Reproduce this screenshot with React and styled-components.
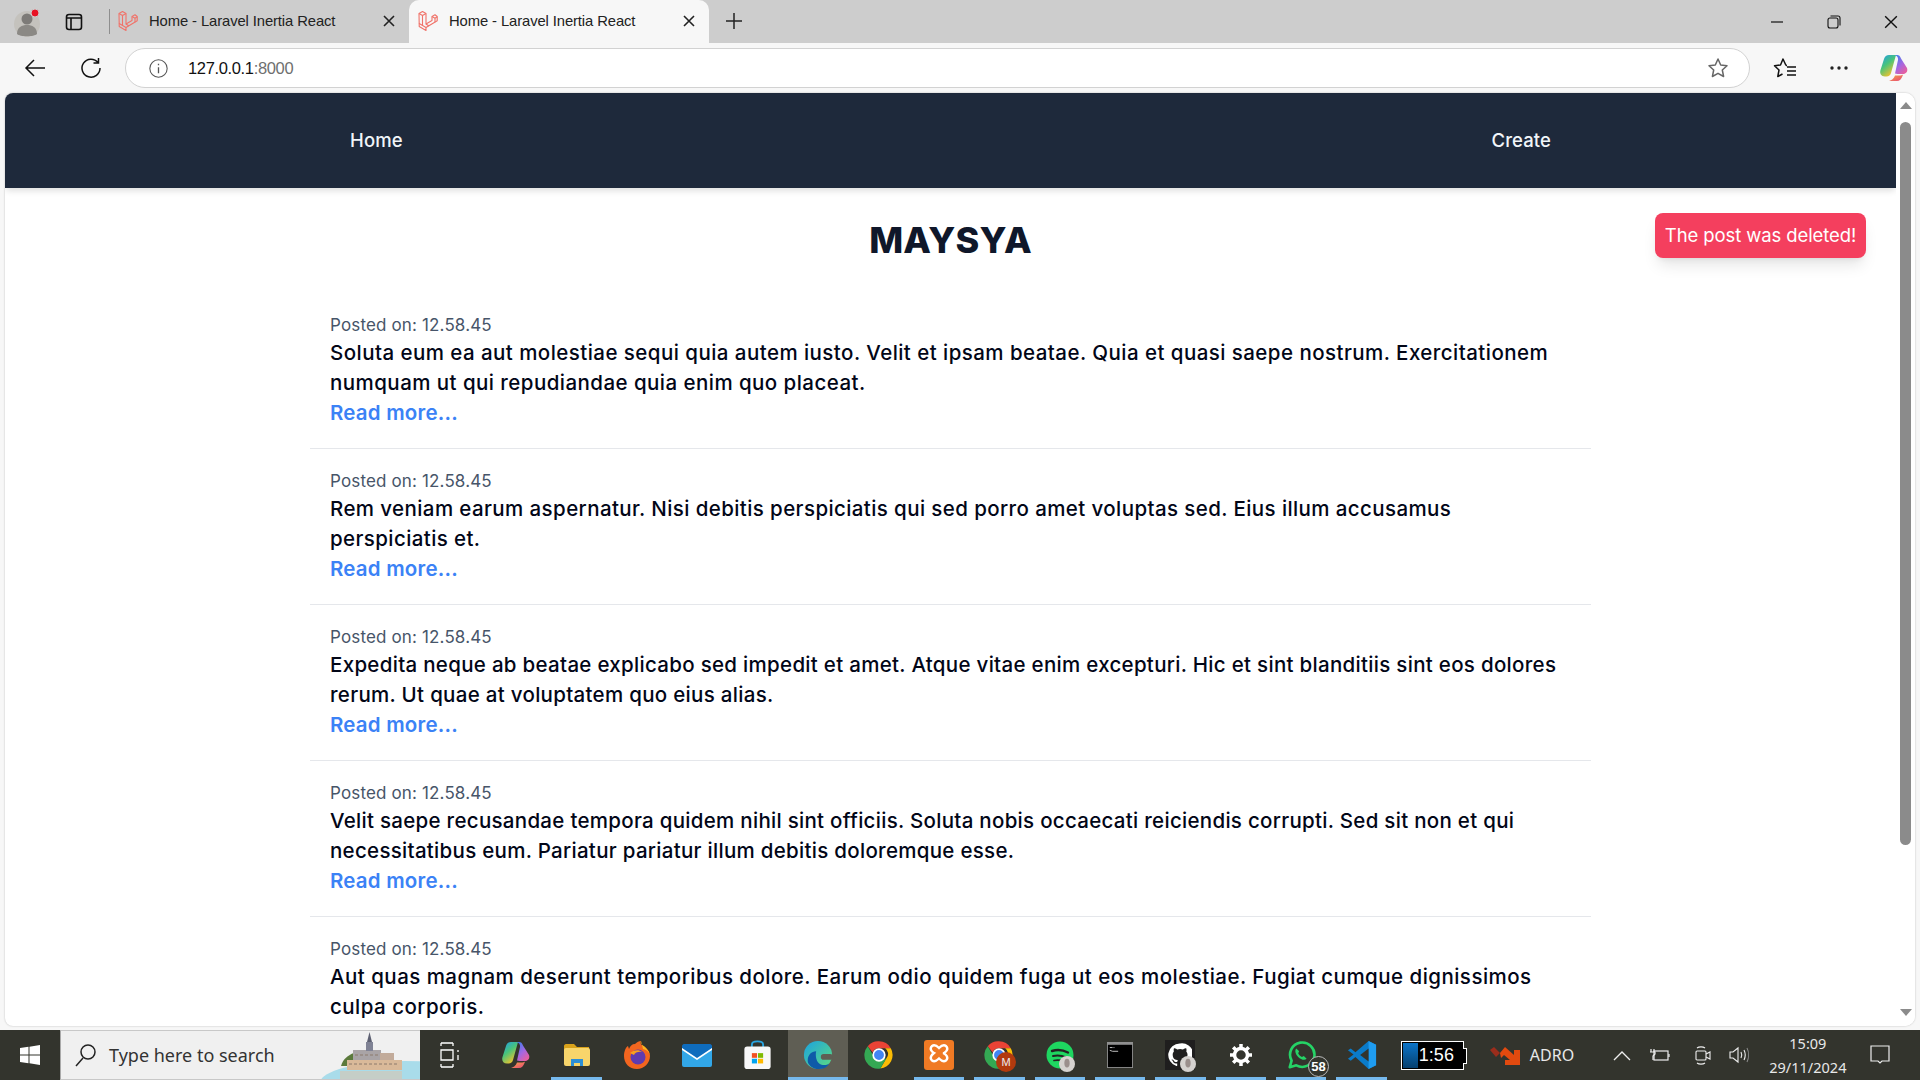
import React from "react";
import styled, { createGlobalStyle } from "styled-components";

const Global = createGlobalStyle`
  html, body { margin: 0; padding: 0; height: 100%; overflow: hidden; background: #fff; }
  #root { width: 1920px; height: 1080px; }
  * { box-sizing: border-box; }
`;
const Desktop = styled.div`
  width: 1920px; height: 1080px; display: flex; flex-direction: column; overflow: hidden;
  font-family: "Open Sans", "Liberation Sans", sans-serif;
`;
const TabStrip = styled.div`
  height: 43px; flex: none; background: #cdcdcd; display: flex; align-items: stretch; position: relative;
`;
const ProfileSlot = styled.div`
  width: 56px; display: flex; align-items: center; justify-content: center;
`;
const SideSlot = styled.div`
  width: 36px; display: flex; align-items: center; justify-content: center; margin-right: 17px;
`;
const Tab = styled.div`
  width: 300px; display: flex; align-items: center; gap: 11px; padding: 0 0 2px 9px; position: relative;
  font-family: "Liberation Sans", sans-serif; font-size: 14.8px; color: #222; letter-spacing: -.1px;
  background: ${p => (p.$active ? "#f7f7f7" : "transparent")};
  border-radius: ${p => (p.$active ? "10px 10px 0 0" : "0")};
  &::before {
    content: ""; display: ${p => (p.$active ? "none" : "block")}; position: absolute; left: 0; top: 9px; bottom: 9px; width: 1px; background: #8e8e8e;
  }
`;
const TabTitle = styled.span` flex: 1; white-space: nowrap; `;
const TabClose = styled.span` width: 40px; display: flex; align-items: center; justify-content: center; `;
const NewTab = styled.div` width: 50px; display: flex; align-items: center; justify-content: center; padding-bottom: 2px; `;
const WinControls = styled.div` margin-left: auto; display: flex; padding-right: 1px; `;
const WinBtn = styled.div` width: 57px; display: flex; align-items: center; justify-content: center; `;

const Toolbar = styled.div`
  height: 50px; flex: none; background: #f7f7f7; display: flex; align-items: center; padding: 0 0 0 12px;
`;
const ToolBtn = styled.div`
  width: ${p => p.$w || 55}px; height: 40px; flex: none; display: flex; align-items: center; justify-content: center;
  padding-left: ${p => p.$pl || 0}px;
`;
const Address = styled.div`
  width: 1625px; height: 40px; margin: 0 0 0 1px; background: #fff; border: 1.5px solid #d2d2d2; border-radius: 20px;
  display: flex; align-items: center; padding: 0 20px 0 23px; flex: none;
`;
const Url = styled.div`
  margin-left: 20px; font-family: "Liberation Sans", sans-serif; font-size: 16.5px; color: #111; letter-spacing: -.35px;
  span { color: #6f6f6f; }
`;
const AddressEnd = styled.div` margin-left: auto; display: flex; `;

const ViewportArea = styled.div`
  flex: 1; min-height: 0; background: #f7f7f7; padding: 0 5px 4px 5px; display: flex;
`;
const PageFrame = styled.div`
  flex: 1; background: #fff; border-radius: 8px 10px 10px 8px; overflow: hidden; display: flex; position: relative;
  box-shadow: 0 0 2px rgba(0,0,0,.25);
`;
const Page = styled.div` flex: 1; min-width: 0; overflow: hidden; font-family: Inter, "Noto Sans", sans-serif; `;
const Nav = styled.nav`
  height: 95px; background: #1e293b; display: flex; align-items: center; justify-content: space-between;
  padding: 0 345px 2px; box-shadow: 0 4px 6px -1px rgba(0,0,0,.12);
`;
const NavLink = styled.a` color: #f1f5f9; font-size: 18.5px; font-weight: 500; letter-spacing: .1px; `;
const Title = styled.h1`
  margin: 0; padding-top: 29px; height: 105px; text-align: center; font-size: 36px; line-height: 46px; font-weight: 800; color: #0f172a;
  letter-spacing: .2px; font-family: Inter, sans-serif;
`;
const Posts = styled.div` width: 1281px; margin-left: 305px; `;
const Post = styled.article` height: 156px; padding: 19px 20px 0 20px; border-bottom: 1px solid #e5e7eb; `;
const Posted = styled.div`
  font-size: 17px; line-height: 26px; color: #475569; font-weight: 400; letter-spacing: .15px;
`;
const Body = styled.p`
  margin: 0; font-size: 20.5px; line-height: 30px; font-weight: 500; color: #020617; letter-spacing: ${p => p.$ls}px;
`;
const More = styled.a` display: block; font-size: 20.5px; line-height: 30px; font-weight: 600; color: #3b82f6; letter-spacing: .2px; `;
const Toast = styled.div`
  position: absolute; top: 120px; left: 1650px; width: 211px; height: 45px; border-radius: 8px; background: #f43f5e; color: #fff; padding-bottom: 2px;
  font-family: Inter, sans-serif; font-size: 18.5px; font-weight: 400; letter-spacing: -.1px;
  display: flex; align-items: center; justify-content: center; white-space: nowrap;
  box-shadow: 0 10px 15px -3px rgba(0,0,0,.1), 0 4px 6px -4px rgba(0,0,0,.1);
`;
const Scrollbar = styled.div` width: 19px; flex: none; background: #fff; display: flex; flex-direction: column; align-items: center; padding: 9px 0 10px; `;
const ArrowUp = styled.div` width: 0; height: 0; border-left: 6.5px solid transparent; border-right: 6.5px solid transparent; border-bottom: 7px solid #8b8b8b; `;
const ArrowDown = styled(ArrowUp)` border-bottom: 0; border-top: 7px solid #8b8b8b; margin-top: auto; `;
const Thumb = styled.div` width: 11px; height: 723px; background: #8b8b8b; border-radius: 6px; margin-top: 13px; `;

const Taskbar = styled.div` height: 50px; flex: none; background: #33342d; display: flex; align-items: stretch; color: #fff; `;
const StartBtn = styled.div` width: 60px; display: flex; align-items: center; justify-content: center; `;
const Search = styled.div`
  width: 360px; background: #f0f0f0; border-top: 1px solid #c8c8c8; border-bottom: 1px solid #c8c8c8; border-left: 1px solid #aaa; display: flex; align-items: center; position: relative;
  padding-left: 14px; gap: 12px; color: #333; font-family: "Noto Sans", sans-serif; font-size: 18px; overflow: hidden;
`;
const SearchArt = styled.div` position: absolute; right: 0; top: 0; bottom: 0; width: 100px; `;
const TaskCell = styled.div`
  width: ${p => p.$w || 60.4}px; flex: none; display: flex; align-items: center; justify-content: center; position: relative;
  background: ${p => (p.$active ? "#5f5e54" : "transparent")};
  &::after {
    content: ""; display: ${p => (p.$on ? "block" : "none")}; position: absolute; bottom: 0; left: ${p => (p.$active ? "0" : "5px")}; right: ${p => (p.$active ? "0" : "5px")}; height: 3px; background: #76b9ed;
  }
`;
const Battery = styled.div`
  position: relative; width: 63px; height: 29px; margin: 0 26px 0 9px; align-self: center; background: #000; border: 1.5px solid #fff; display: flex; align-items: center; flex: none;
  font-family: "Liberation Sans", sans-serif; font-size: 18px;
  &::before { content: ""; width: 15px; align-self: stretch; margin: 1px 0 1px 1px; background: linear-gradient(#0b74c8, #06406f); }
  &::after { content: ""; position: absolute; right: -4px; top: 6px; width: 3px; height: 14px; background: #000; border: 1.5px solid #fff; border-left: 0; }
`;
const BatteryText = styled.span` margin-left: 1px; `;
const Ticker = styled.div` display: flex; align-items: center; gap: 10px; font-family: "Noto Sans", sans-serif; font-size: 16px; color: #e8e8e8; width: 113px; flex: none; `;
const Tray = styled.div` display: flex; align-items: center; `;
const TrayIcon = styled.div` width: ${p => p.$w || 38}px; flex: none; display: flex; align-items: center; justify-content: center; `;
const Clock = styled.div`
  width: 110px; flex: none; text-align: center; font-family: "Noto Sans", sans-serif; font-size: 14.5px; line-height: 24px; color: #e8e8e8;
`;
const Badge = styled.span`
  position: absolute; left: 37px; top: 26px; width: 21px; height: 21px; border-radius: 50%; background: #33342d; border: 1px solid #bbb;
  font-family: "Liberation Sans", sans-serif; font-size: 13px; font-weight: 700; display: flex; align-items: center; justify-content: center; color: #fff;
`;
const IconStack = styled.span` position: relative; display: flex; `;
const AvatarSpot = styled.span` position: absolute; left: ${p => p.$l}px; top: ${p => p.$t}px; display: flex; `;
const GitTile = styled(IconStack)` width: 30px; height: 30px; background: #1f1e1e; align-items: center; justify-content: center; `;

const Laravel = () => (
  <svg width="20" height="22" viewBox="0 0 20 22" fill="none" stroke="#f0736a" strokeWidth="1.1" strokeLinejoin="round">
    <path d="M1 3.5 4.5 1.5 8 3.5V14l6-3.4V6.5l3-1.8 2.2 1.8v4.2L8 17.5 1.2 13.6Z" />
    <path d="M1 3.5 4.5 5.5 8 3.5M4.5 5.5v10M8 14l3 2M14 6.5l3 1.8 2.2-1.6M17 8.3v4M8 17.5v3l-6.8-3.9v-3" />
  </svg>
);
const XIcon = ({ s = 12, c = "#222", w = 1.6 }) => (
  <svg width={s} height={s} viewBox="0 0 12 12" stroke={c} strokeWidth={w}><path d="M1 1l10 10M11 1 1 11" /></svg>
);
const Profile = () => (
  <svg width="36" height="36" viewBox="0 0 36 36">
    <circle cx="17" cy="20" r="13" fill="#c4c2bd" />
    <circle cx="17" cy="15" r="5.5" fill="#7d7b78" />
    <path d="M7 30c0-7 5-9 10-9s10 2 10 9c-3 3-17 3-20 0Z" fill="#8b8985" />
    <circle cx="25" cy="9" r="4" fill="#e81123" stroke="#cdcdcd" />
  </svg>
);
const Colorful = ({ id = "a" }) => (
  <svg width="30" height="28" viewBox="0 0 30 28">
    <defs>
      <linearGradient id={`cpA${id}`} x1="0" y1="0" x2=".6" y2="1"><stop offset="0" stopColor="#1d9bf0" /><stop offset=".5" stopColor="#49c47a" /><stop offset="1" stopColor="#f5c22a" /></linearGradient>
      <linearGradient id={`cpB${id}`} x1="0" y1="0" x2=".7" y2="1"><stop offset="0" stopColor="#2d7ff0" /><stop offset=".6" stopColor="#a667e0" /><stop offset="1" stopColor="#e65fa0" /></linearGradient>
      <linearGradient id={`cpC${id}`} x1="0" y1="0" x2="1" y2="1"><stop offset="0" stopColor="#f7b23b" /><stop offset="1" stopColor="#e8447a" /></linearGradient>
    </defs>
    <path d="M10 1h7l-5 18c-.6 2-2 3.500-4.500 3.500H6C2 22.500.5 19.500 1.500 16L5 5c.8-2.600 2.600-4 5-4Z" fill={`url(#cpA${id})`} />
    <path d="M15 1h3c2 0 3.200 1.200 4 3.400L28 14c1.200 3.400-1 6-4 6h-5.500l-2.500-.5L19 6c.5-2.500-1.500-5-4-5Z" fill={`url(#cpB${id})`} />
    <path d="M9 27h9c2.500 0 4.500-2 5.500-5l.5-1.500c-1 .7-2 1-4 1h-4C15 24.500 12 27 9 27Z" fill={`url(#cpC${id})`} />
  </svg>
);
const Star = ({ c = "#666", size = 22 }) => (
  <svg width={size} height={size} viewBox="0 0 22 22" fill="none" stroke={c} strokeWidth="1.500" strokeLinejoin="round">
    <path d="M11 2l2.700 6 6.300.7-4.700 4.300 1.300 6.500L11 16.300 5.400 19.500l1.300-6.500L2 8.700 8.300 8Z" />
  </svg>
);
const Favs = () => (
  <svg width="24" height="22" viewBox="0 0 24 22" fill="none" stroke="#111" strokeWidth="1.500" strokeLinejoin="round">
    <path d="M13 8.500 10 2 7.500 8 1.500 8.700 6 13 4.800 19.500 9.500 17" />
    <path d="M13 8.500h1M14 10h9M14 14h9M14 18h9" />
  </svg>
);
const Win = () => (
  <svg width="20" height="20" viewBox="0 0 20 20" fill="#fff"><path d="M0 3l8.500-1.200V9.500H0ZM9.500 1.700 20 0v9.500H9.500ZM0 10.500h8.500v7.700L0 17ZM9.500 10.500H20V20L9.500 18.300Z" /></svg>
);
const Island = () => (
  <svg width="100" height="48" viewBox="0 0 100 48">
    <ellipse cx="85" cy="52" rx="85" ry="22" fill="#a9dcea" />
    <path d="M20 40h62v8H20Z" fill="#cfc9bb" opacity=".75" />
    <path d="M21 35c2-7 7-11 13-13l4 13Z" fill="#5b7a3c" />
    <rect x="27" y="29" width="55" height="10" fill="#d9b999" />
    <rect x="33" y="19" width="28" height="10" fill="#a9a4a6" />
    <rect x="60" y="22" width="14" height="7" fill="#c2ab9a" />
    <rect x="46" y="11" width="7" height="9" fill="#7f8294" />
    <path d="M47 11 49.500 1 52 11Z" fill="#5d6072" />
    <path d="M29 33h50M35 24h24" stroke="#8c7a6c" strokeWidth="1" strokeDasharray="3 2" />
  </svg>
);
const Folder = () => (
  <svg width="28" height="26" viewBox="0 0 28 24"><path d="M1 3c0-1 .8-2 2-2h8l3 3h12v3H1Z" fill="#d9a21b" /><rect x="1" y="5" width="26" height="18" rx="2" fill="#f8d56b" /><path d="M8 23v-7h12v7h-3v-3h-6v3Z" fill="#2d8fd6" /></svg>
);
const Firefox = () => (
  <svg width="28" height="30" viewBox="0 0 28 30">
    <path d="M14 29C6 29 1 23 1 16 1 11 3 7 5 6l1 3c1-3 3-5 6-5 2-2 4-3 6-3-1 2 0 4 2 5 4 2 7 6 7 10 0 7-6 13-13 13Z" fill="#f2651f" />
    <path d="M18 1c-1 3 2 4 4 6 3 3 5 6 5 9 0-3-3-6-7-7Z" fill="#fbb51c" />
    <circle cx="15" cy="17" r="7.500" fill="#5f3bb0" /><path d="M7 13c3-3 9-4 12-1-3-.5-7 0-8 3Z" fill="#f8a01e" />
  </svg>
);
const Mail = () => (
  <svg width="30" height="26" viewBox="0 0 30 24"><rect y="3" width="30" height="21" rx="2" fill="#32a7e8" /><path d="M0 5l15 11L30 5V3c0-1-1-2-2-2H2C1 1 0 2 0 3Z" fill="#0f6cbd" /><path d="M0 5l15 10L30 5v2L15 17 0 7Z" fill="#fff" /></svg>
);
const Store = () => (
  <svg width="29" height="30" viewBox="0 0 30 32">
    <path d="M9 8V5c0-2 2-3.500 6-3.500S21 3 21 5v3" fill="none" stroke="#29a6e2" strokeWidth="2" />
    <rect x="1" y="7" width="28" height="24" rx="3" fill="#f8f8f8" />
    <rect x="9" y="14" width="5.500" height="5" fill="#f25022" /><rect x="15.500" y="14" width="5.500" height="5" fill="#7fba00" />
    <rect x="9" y="20" width="5.500" height="5" fill="#00a4ef" /><rect x="15.500" y="20" width="5.500" height="5" fill="#ffb900" />
  </svg>
);
const Edge = () => (
  <svg width="30" height="30" viewBox="0 0 32 32">
    <defs>
      <linearGradient id="edA" x1="0" y1="0" x2="1" y2="1"><stop offset="0" stopColor="#1aa2e0" /><stop offset="1" stopColor="#5fdc7e" /></linearGradient>
    </defs>
    <circle cx="16" cy="16" r="15" fill="url(#edA)" />
    <path d="M14 12c-5 0-9 4-9 10 0 4 5 9 12 9 5 0 9-2 11-6-3 2-6 2-9 1-5-2-6-9-5-14Z" fill="#0f5aa8" />
    <rect x="19" y="15" width="13" height="6" fill="#5f5e54" rx="3" />
  </svg>
);
const Chrome = ({ size = 30 }) => (
  <svg width={size} height={size} viewBox="2 2 44 44">
    <path d="M24 4a20 20 0 0 1 17.300 10H24a10 10 0 0 0-9.300 6.500L7.500 11A20 20 0 0 1 24 4Z" fill="#ea4335" />
    <path d="M41.300 14A20 20 0 0 1 26 43.900L34.700 29A10 10 0 0 0 33 14Z" fill="#fbbc04" />
    <path d="M26 43.900A20 20 0 0 1 7.500 11l8.700 15a10 10 0 0 0 10 4.800L34.700 29Z" fill="#34a853" />
    <circle cx="24" cy="24" r="8.500" fill="#4285f4" stroke="#fff" strokeWidth="2.500" />
  </svg>
);
const Xampp = () => (
  <svg width="30" height="30" viewBox="0 0 30 30">
    <rect width="30" height="30" rx="3" fill="#f07a24" />
    <path d="M8 6c3-2 5 0 7 2 2-2 4-4 7-2 3 3 0 6-2 7l0 .5c2 1 5 4 2 7-3 2-5 0-7-2-2 2-4 4-7 2-3-3 0-6 2-7.500-2-1-5-4-2-7Z" fill="none" stroke="#fff" strokeWidth="2.400" />
  </svg>
);
const Avatar = () => (
  <svg width="16" height="18" viewBox="0 0 18 18"><circle cx="9" cy="9" r="9" fill="#d5d2cf" /><ellipse cx="9" cy="8" rx="3" ry="5" fill="#9a8f8c" /></svg>
);
const Spotify = () => (
  <IconStack>
    <svg width="28" height="28" viewBox="0 0 28 28" fill="none"><circle cx="14" cy="14" r="13.500" fill="#1ed760" /><g stroke="#222" strokeLinecap="round"><path d="M6 10c5-1.500 11-1 16 1.500" strokeWidth="2.400" /><path d="M7 15c5-1 9-.5 13 1.500" strokeWidth="2" /><path d="M8 19.500c4-.8 7-.4 10.500 1" strokeWidth="1.700" /></g></svg>
    <AvatarSpot $l={13} $t={14}><Avatar /></AvatarSpot>
  </IconStack>
);
const Cmd = () => (
  <svg width="28" height="26" viewBox="0 0 28 28"><rect width="28" height="28" fill="#8f8f8f" /><rect x="1" y="3" width="26" height="24" fill="#000" /><path d="M3 6h3M7 6h1M3 9l3 1h6" stroke="#ccc" fill="none" /></svg>
);
const GitHub = () => (
  <GitTile>
    <svg width="24" height="24" viewBox="0 0 24 24" fill="#fff"><path d="M12 .5A11.500 11.500 0 0 0 8.400 23c.6.100.8-.3.800-.6v-2c-3.200.7-3.900-1.400-3.900-1.400-.5-1.300-1.300-1.700-1.300-1.700-1-.7.100-.7.100-.7 1.200.1 1.800 1.200 1.800 1.200 1 1.800 2.700 1.300 3.400 1 .1-.8.400-1.300.7-1.600-2.600-.3-5.300-1.300-5.300-5.700 0-1.300.5-2.300 1.200-3.100-.1-.3-.5-1.500.1-3.100 0 0 1-.3 3.200 1.200a11 11 0 0 1 5.800 0c2.200-1.500 3.200-1.200 3.200-1.200.6 1.600.2 2.800.1 3.100.8.800 1.200 1.900 1.200 3.100 0 4.400-2.700 5.400-5.300 5.700.4.400.8 1.100.8 2.200v3.200c0 .3.200.7.800.6A11.500 11.500 0 0 0 12 .5Z" /></svg>
    <AvatarSpot $l={15} $t={15}><Avatar /></AvatarSpot>
  </GitTile>
);
const Gear = () => (
  <svg width="24" height="24" viewBox="0 0 24 24" fill="none" stroke="#fff"><circle cx="12" cy="12" r="6.500" strokeWidth="3.500" /><path d="M12 1v4M12 19v4M1 12h4M19 12h4M4.200 4.200l2.800 2.800M17 17l2.800 2.800M19.800 4.200 17 7M7 17l-2.800 2.800" strokeWidth="3.500" /></svg>
);
const Whatsapp = () => (
  <svg width="30" height="30" viewBox="0 0 30 32" fill="none"><path d="M3 29l2-7A13 13 0 1 1 10 27Z" stroke="#25d366" strokeWidth="2.800" strokeLinejoin="round" /><path d="M10 9c-2 2-1 6 2 9s7 4 9 2l-3-3-2 1c-2-1-3-2-4-4l1-2Z" fill="#25d366" /></svg>
);
const VSCode = () => (
  <svg width="30" height="30" viewBox="0 0 30 32">
    <path d="M22 1 30 5v22l-8 4L8 18l-5 4-3-2 6-4.500L0 11l3-2 5 4Z" fill="#0a7bca" />
    <path d="M22 1v30l8-4V5Z" fill="#1f9cf0" /><path d="M22 9 13 16l9 7Z" fill="#33342d" />
  </svg>
);
const Adro = () => (
  <svg width="30" height="20" viewBox="0 0 30 20"><path d="M0 5l4-3 6 6-4 4Z" fill="#9b2d1c" /><path d="M10 8l5-6 9 8V5h6v15H15v-5h5l-6-5-3 3Z" fill="#e24a0f" /></svg>
);
const Mbadge = () => (
  <IconStack>
    <Chrome />
    <AvatarSpot $l={12} $t={12}>
      <svg width="20" height="20" viewBox="0 0 20 20"><circle cx="10" cy="10" r="10" fill="#b23a0e" /><text x="10" y="14" textAnchor="middle" fontSize="11" fill="#eee" fontFamily="Liberation Sans">M</text></svg>
    </AvatarSpot>
  </IconStack>
);

const posts = [
  { ls: 0.45, t: "Soluta eum ea aut molestiae sequi quia autem iusto. Velit et ipsam beatae. Quia et quasi saepe nostrum. Exercitationem numquam ut qui repudiandae quia enim quo placeat.", more: true },
  { ls: 0.4, t: "Rem veniam earum aspernatur. Nisi debitis perspiciatis qui sed porro amet voluptas sed. Eius illum accusamus perspiciatis et.", more: true },
  { ls: 0.3, t: "Expedita neque ab beatae explicabo sed impedit et amet. Atque vitae enim excepturi. Hic et sint blanditiis sint eos dolores rerum. Ut quae at voluptatem quo eius alias.", more: true },
  { ls: 0.29, t: "Velit saepe recusandae tempora quidem nihil sint officiis. Soluta nobis occaecati reiciendis corrupti. Sed sit non et qui necessitatibus eum. Pariatur pariatur illum debitis doloremque esse.", more: true },
  { ls: 0.47, t: "Aut quas magnam deserunt temporibus dolore. Earum odio quidem fuga ut eos molestiae. Fugiat cumque dignissimos culpa corporis.", more: false },
];

export default function App() {
  return (
    <Desktop>
      <Global />
      <TabStrip>
        <ProfileSlot><Profile /></ProfileSlot>
        <SideSlot>
          <svg width="18" height="18" viewBox="0 0 18 18" fill="none" stroke="#111" strokeWidth="1.600"><rect x="1.500" y="1.500" width="15" height="15" rx="2.500" /><path d="M1.500 5h15M6 5v11.500" /></svg>
        </SideSlot>
        <Tab><Laravel /><TabTitle>Home - Laravel Inertia React</TabTitle><TabClose><XIcon /></TabClose></Tab>
        <Tab $active><Laravel /><TabTitle>Home - Laravel Inertia React</TabTitle><TabClose><XIcon /></TabClose></Tab>
        <NewTab><svg width="18" height="18" viewBox="0 0 18 18" stroke="#222" strokeWidth="1.500"><path d="M9 1v16M1 9h16" /></svg></NewTab>
        <WinControls>
          <WinBtn><svg width="14" height="14" viewBox="0 0 14 14" stroke="#111" strokeWidth="1.200"><path d="M1 7h12" /></svg></WinBtn>
          <WinBtn><svg width="14" height="14" viewBox="0 0 14 14" fill="none" stroke="#111" strokeWidth="1.100"><rect x="1" y="3" width="10" height="10" rx="2" /><path d="M3.500 1H11a2 2 0 0 1 2 2v7.500" /></svg></WinBtn>
          <WinBtn><XIcon s={14} c="#111" w={1.200} /></WinBtn>
        </WinControls>
      </TabStrip>
      <Toolbar>
        <ToolBtn $w={46}><svg width="22" height="20" viewBox="0 0 22 20" fill="none" stroke="#111" strokeWidth="1.500"><path d="M21 10H2M10 2l-8 8 8 8" /></svg></ToolBtn>
        <ToolBtn $w={66}><svg width="22" height="22" viewBox="0 0 22 22" fill="none" stroke="#111" strokeWidth="1.500"><path d="M18 5.500A9 9 0 1 0 20 11M18.500 1v5h-5" /></svg></ToolBtn>
        <Address>
          <svg width="19" height="19" viewBox="0 0 16 16" fill="none" stroke="#555" strokeWidth=".9"><circle cx="8" cy="8" r="7.300" /><path d="M8 7v5M8 4v1.300" strokeWidth="1.100" /></svg>
          <Url>127.0.0.1<span>:8000</span></Url>
          <AddressEnd><Star /></AddressEnd>
        </Address>
        <ToolBtn $w={69}><Favs /></ToolBtn>
        <ToolBtn $w={40}><svg width="20" height="6" viewBox="0 0 20 6" fill="#222"><circle cx="3" cy="3" r="1.700" /><circle cx="10" cy="3" r="1.700" /><circle cx="17" cy="3" r="1.700" /></svg></ToolBtn>
        <ToolBtn $w={61} $pl={8}><Colorful id="t" /></ToolBtn>
      </Toolbar>
      <ViewportArea>
        <PageFrame>
          <Page>
            <Nav><NavLink>Home</NavLink><NavLink>Create</NavLink></Nav>
            <Title>MAYSYA</Title>
            <Posts>
              {posts.map((p, i) => (
                <Post key={i}>
                  <Posted>Posted on: 12.58.45</Posted>
                  <Body $ls={p.ls}>{p.t}</Body>
                  {p.more && <More>Read more...</More>}
                </Post>
              ))}
            </Posts>
          </Page>
          <Scrollbar><ArrowUp /><Thumb /><ArrowDown /></Scrollbar>
          <Toast>The post was deleted!</Toast>
        </PageFrame>
      </ViewportArea>
      <Taskbar>
        <StartBtn><Win /></StartBtn>
        <Search>
          <svg width="22" height="24" viewBox="0 0 22 24" fill="none" stroke="#222" strokeWidth="1.500"><circle cx="13" cy="9" r="7" /><path d="M8 15 1 23" /></svg>
          Type here to search
          <SearchArt><Island /></SearchArt>
        </Search>
        <TaskCell $w={66}><svg width="20" height="26" viewBox="0 0 20 26" fill="none" stroke="#fff" strokeWidth="1.300" style={{ marginRight: 6 }}><path d="M1 1h12M1 25h12M1 8h12v10H1ZM1 1v3M13 1v3M1 22v3M13 22v3M18 8v2M18 13v5" /></svg></TaskCell>
        <TaskCell><Colorful id="b" /></TaskCell>
        <TaskCell $on><Folder /></TaskCell>
        <TaskCell><Firefox /></TaskCell>
        <TaskCell><Mail /></TaskCell>
        <TaskCell><Store /></TaskCell>
        <TaskCell $on $active><Edge /></TaskCell>
        <TaskCell><Chrome /></TaskCell>
        <TaskCell $on><Xampp /></TaskCell>
        <TaskCell $on><Mbadge /></TaskCell>
        <TaskCell $on><Spotify /></TaskCell>
        <TaskCell $on><Cmd /></TaskCell>
        <TaskCell $on><GitHub /></TaskCell>
        <TaskCell $on><Gear /></TaskCell>
        <TaskCell $on><Whatsapp /><Badge>58</Badge></TaskCell>
        <TaskCell $on><VSCode /></TaskCell>
        <Battery><BatteryText>1:56</BatteryText></Battery>
        <Ticker><Adro />ADRO</Ticker>
        <Tray>
          <TrayIcon><svg width="18" height="11" viewBox="0 0 18 11" fill="none" stroke="#eee" strokeWidth="1.300"><path d="M1 10l8-8 8 8" /></svg></TrayIcon>
          <TrayIcon><svg width="20" height="14" viewBox="0 0 20 14" fill="none" stroke="#eee" strokeWidth="1.200"><rect x="4" y="3" width="14" height="9" /><path d="M19 6v3M1 1v3M4 1v3M0 4h5v2l-2 2v4" /></svg></TrayIcon>
          <TrayIcon $w={48}><svg width="16" height="20" viewBox="0 0 16 20" fill="none" stroke="#eee" strokeWidth="1.100"><rect x="1" y="6" width="10" height="9" rx="1" /><path d="M11 9l4-2v7l-4-2M2 3c2-1.500 6-1.500 8 0M2 18c2 1.500 6 1.500 8 0" /></svg></TrayIcon>
          <TrayIcon $w={26}><svg width="21" height="18" viewBox="0 0 21 18" fill="none" stroke="#eee" strokeWidth="1.100"><path d="M1 6h3l5-4v14l-5-4H1Z" /><path d="M12 6c1 2 1 4 0 6M15 4c1.500 3 1.500 7 0 10" /><path d="M18 2c2 4 2 10 0 14" stroke="#888" /></svg></TrayIcon>
          <Clock>15:09<br />29/11/2024</Clock>
          <TrayIcon $w={34}><svg width="20" height="20" viewBox="0 0 20 20" fill="none" stroke="#eee" strokeWidth="1.200"><path d="M1 1h18v15h-7l-2 2-2-2H1Z" /></svg></TrayIcon>
        </Tray>
      </Taskbar>
    </Desktop>
  );
}
